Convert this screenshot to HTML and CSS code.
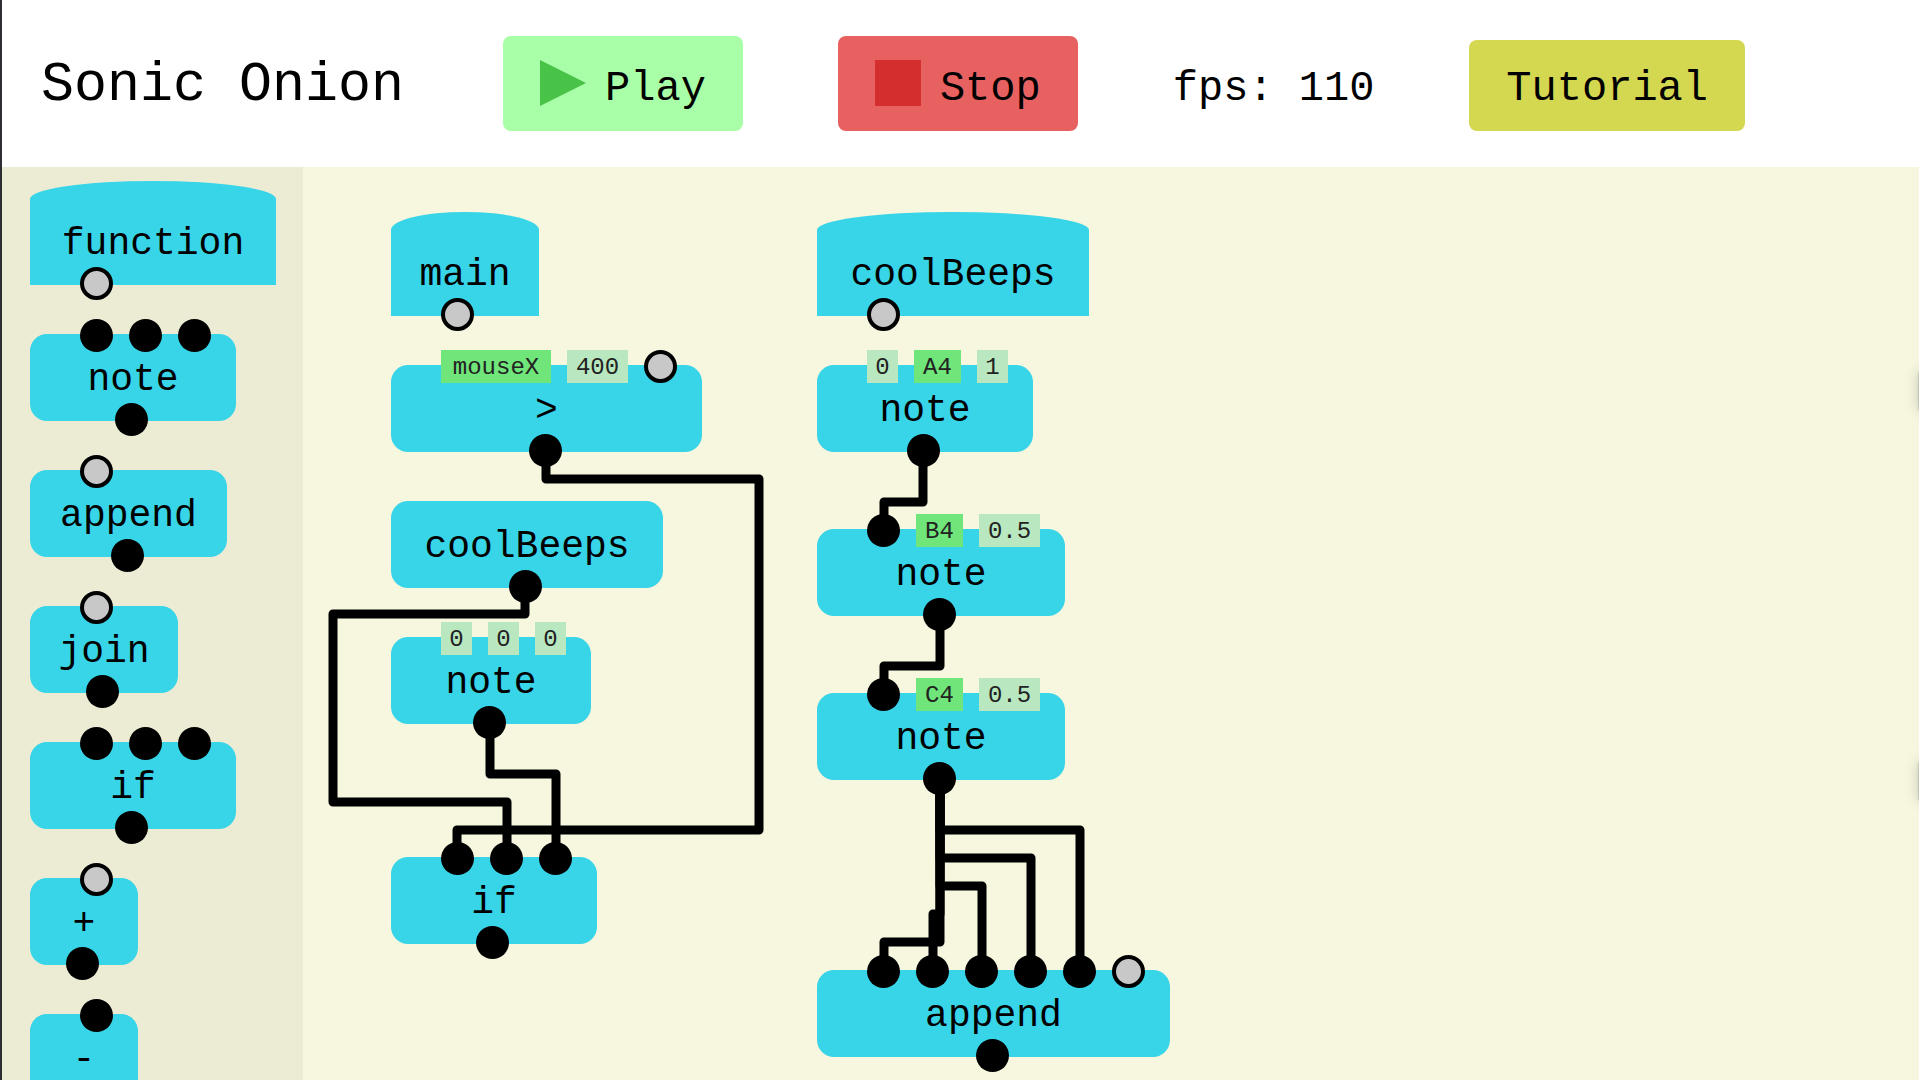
FILE: index.html
```html
<!DOCTYPE html>
<html lang="en">
<head>
<meta charset="utf-8">
<title>Sonic Onion</title>
<link rel="stylesheet" href="styles.css">
</head>
<body>
<header class="toolbar">
  <h1 class="title">Sonic Onion</h1>
  <button class="btn btn-play" type="button"><svg class="icon" viewBox="0 0 46 46" aria-hidden="true"><path d="M0 0L46 23L0 46Z" fill="#48c247"/></svg><span class="btn-text">Play</span></button>
  <button class="btn btn-stop" type="button"><svg class="icon" viewBox="0 0 46 46" aria-hidden="true"><path d="M0 0H46V46H0Z" fill="#d42e2e"/></svg><span class="btn-text">Stop</span></button>
  <span class="fps">fps: 110</span>
  <button class="btn btn-tutorial" type="button"><span class="btn-text">Tutorial</span></button>
</header>
<main class="workspace">
  <aside class="palette">
    <div class="node fn w8"><span class="label">function</span><i class="port open first"></i></div>
    <div class="node"><div class="inputs"><i class="port"></i><i class="port"></i><i class="port"></i></div><span class="label">note</span><i class="port out"></i></div>
    <div class="node w6"><div class="inputs"><i class="port open"></i></div><span class="label">append</span><i class="port out"></i></div>
    <div class="node w4"><div class="inputs"><i class="port open"></i></div><span class="label">join</span><i class="port out"></i></div>
    <div class="node"><div class="inputs"><i class="port"></i><i class="port"></i><i class="port"></i></div><span class="label">if</span><i class="port out"></i></div>
    <div class="node"><div class="inputs"><i class="port open"></i></div><span class="label">+</span><i class="port out"></i></div>
    <div class="node"><div class="inputs"><i class="port"></i></div><span class="label">-</span><i class="port out"></i></div>
  </aside>
  <section class="canvas">
    <svg class="wires" aria-hidden="true">
      <path d="M243 284V312H456V663H154V691"/>
      <path d="M222 419V447H30V635H204V691"/>
      <path d="M187 555V607H253V691"/>
      <path d="M620 283V335H581V363"/>
      <path d="M637 447V499H581V527"/>
      <path d="M637 611V775H581V804"/>
      <path d="M637 611V747H630V804"/>
      <path d="M637 611V719H679V804"/>
      <path d="M637 611V691H728V804"/>
      <path d="M637 611V663H777V804"/>
    </svg>
    <div class="node fn w4 main-fn"><span class="label">main</span><i class="port open first"></i></div>
    <div class="node greater">
      <div class="inputs"><input class="chip name len6" aria-label="Left operand" value="mouseX"><input class="chip len3" aria-label="Right operand" value="400"><i class="port open"></i></div>
      <span class="label">&gt;</span><i class="port out"></i>
    </div>
    <div class="node w9 call beeps-call"><span class="label">coolBeeps</span><i class="port out"></i></div>
    <div class="node silence">
      <div class="inputs"><input class="chip" aria-label="Start" value="0"><input class="chip" aria-label="Pitch" value="0"><input class="chip" aria-label="Duration" value="0"></div>
      <span class="label">note</span><i class="port out"></i>
    </div>
    <div class="node choose"><div class="inputs"><i class="port"></i><i class="port"></i><i class="port"></i></div><span class="label">if</span><i class="port out"></i></div>
    <div class="node fn w9 beeps-fn"><span class="label">coolBeeps</span><i class="port open first"></i></div>
    <div class="node note-a">
      <div class="inputs"><input class="chip" aria-label="Start" value="0"><input class="chip name len2" aria-label="Pitch" value="A4"><input class="chip" aria-label="Duration" value="1"></div>
      <span class="label">note</span><i class="port out"></i>
    </div>
    <div class="node note-b">
      <div class="inputs"><i class="port"></i><input class="chip name len2" aria-label="Pitch" value="B4"><input class="chip len3" aria-label="Duration" value="0.5"></div>
      <span class="label">note</span><i class="port out"></i>
    </div>
    <div class="node note-c">
      <div class="inputs"><i class="port"></i><input class="chip name len2" aria-label="Pitch" value="C4"><input class="chip len3" aria-label="Duration" value="0.5"></div>
      <span class="label">note</span><i class="port out"></i>
    </div>
    <div class="node joined">
      <div class="inputs"><i class="port"></i><i class="port"></i><i class="port"></i><i class="port"></i><i class="port"></i><i class="port open"></i></div>
      <span class="label">append</span><i class="port out"></i>
    </div>
    <div class="edge-tab upper"></div>
    <div class="edge-tab lower"></div>
  </section>
</main>
</body>
</html>
```
FILE: styles.css
```css
* { box-sizing: border-box; }

body {
  margin: 0;
  height: 100vh;
  display: flex;
  flex-direction: column;
  border-left: 2px solid #2e2d33;
  background: #fff;
  color: #000;
  font-family: "Liberation Mono", "DejaVu Sans Mono", monospace;
  overflow: hidden;
}

/* Toolbar */
.toolbar {
  display: flex;
  align-items: baseline;
  gap: 95px;
  height: 167px;
  flex: none;
  padding: 36px 39px 0;
  white-space: nowrap;
}
.title {
  margin: 0;
  padding-right: 4px;
  font-size: 55px;
  font-weight: 400;
  line-height: 64px;
}
.fps { font-size: 42px; line-height: 48px; }
.btn {
  display: inline-flex;
  align-items: baseline;
  gap: 19px;
  padding: 20px 37px 18px;
  border: 0;
  border-radius: 8px;
  color: inherit;
  font: inherit;
  font-size: 42px;
  line-height: 47px;
}
.btn-text { padding-top: 6px; }
.icon { width: 46px; height: 46px; align-self: flex-start; }
.btn-play, .btn-stop { padding-top: 24px; }
.btn-play { background: #a9ffa7; }
.btn-stop { background: #e86161; }
.btn-tutorial { background: #d4d750; }

/* Workspace */
.workspace { flex: 1; display: flex; min-height: 0; }
.palette {
  flex: none;
  width: 301px;
  padding: 14px 28px 0;
  display: flex;
  flex-direction: column;
  align-items: flex-start;
  gap: 49px;
  background: #ececd5;
  overflow: hidden;
}
.canvas {
  position: relative;
  flex: 1;
  margin-right: 1px;
  background: #f7f6de;
  overflow: hidden;
}

/* Nodes */
.node {
  flex: none;
  display: flex;
  flex-direction: column;
  align-items: center;
  height: 87px;
  border-radius: 17px;
  background: #38d4e8;
}
.node.call { padding-top: 18px; }
.node.fn {
  height: 104px;
  padding-top: 35px;
  border-radius: 50% 50% 0 0 / 18px 18px 0 0;
}
.w4 { width: 148px; }
.w6 { width: 197px; }
.w8 { width: 246px; }
.w9 { width: 272px; }
.label {
  padding: 6px 0 2px;
  font-size: 38px;
  line-height: 43px;
}
.inputs {
  align-self: flex-start;
  display: flex;
  gap: 16px;
  height: 33px;
  margin: -15px 25px 0 50px;
}
.port {
  flex: none;
  width: 33px;
  height: 33px;
  border-radius: 50%;
  background: #000;
}
.port.open { border: 4px solid #000; background: #c8c8c8; }
.port.first { align-self: flex-start; margin-left: 50px; }
.port.out { margin-right: 3px; }
.chip {
  width: 31px;
  height: 33px;
  padding: 2px 0 0;
  border: 0;
  border-radius: 0;
  background: #b9e8c0;
  color: #222;
  font: inherit;
  font-size: 24px;
  text-align: center;
}
.chip.name { background: #6fe57a; }
.len2 { width: 47px; }
.len3 { width: 61px; }
.len6 { width: 110px; }

/* Placement on the free canvas */
.wires {
  position: absolute;
  inset: 0;
  width: 100%;
  height: 100%;
  fill: none;
  stroke: #000;
  stroke-width: 9;
  stroke-linejoin: round;
}
.canvas .node { position: absolute; }
.main-fn, .greater, .beeps-call, .silence, .choose { left: 88px; }
.beeps-fn, .note-a, .note-b, .note-c, .joined { left: 514px; }
.main-fn, .beeps-fn { top: 45px; }
.greater, .note-a { top: 198px; }
.beeps-call { top: 334px; }
.silence { top: 470px; }
.choose { top: 690px; }
.note-b { top: 362px; }
.note-c { top: 526px; }
.joined { top: 803px; }

/* Shadows of the tabs docked just past the right edge */
.edge-tab {
  position: absolute;
  left: 100%;
  width: 20px;
  height: 38px;
  box-shadow: 0 0 2px rgba(40, 50, 60, .4), 0 0 14px rgba(40, 50, 60, .25);
}
.upper { top: 205px; }
.lower { top: 595px; }
```
